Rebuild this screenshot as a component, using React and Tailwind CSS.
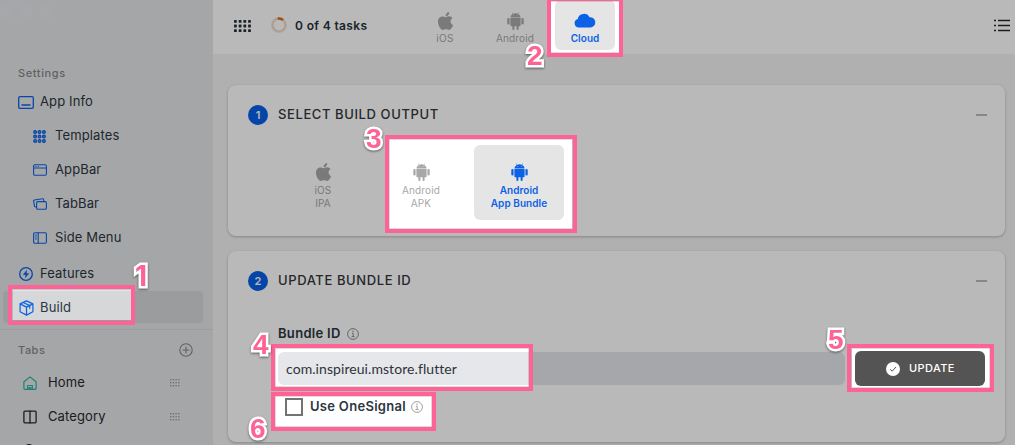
import React from "react";

const Android = ({ className }) => (
  <svg viewBox="0 0 17 18" className={className} fill="currentColor">
    <path d="M3.400 5.600a5.100 4.300 0 0 1 2.400-3.600L4.900.5l.3-.2.9 1.500a6 6 0 0 1 4.800 0L11.800.3l.3.2-.9 1.500a5.100 4.300 0 0 1 2.400 3.600z" />
    <path d="M3.400 6.100h10.200v7.200a1 1 0 0 1-1 1h-1v2.600a1 1 0 0 1-2 0v-2.600H7.400v2.600a1 1 0 0 1-2 0v-2.600h-1a1 1 0 0 1-1-1z" />
    <rect x="0.300" y="6" width="2.300" height="6.600" rx="1.100" />
    <rect x="14.400" y="6" width="2.300" height="6.600" rx="1.100" />
    <circle cx="6.300" cy="3.700" r="0.400" fill="#e5e5e5" />
    <circle cx="10.700" cy="3.700" r="0.400" fill="#e5e5e5" />
  </svg>
);

const Apple = ({ className }) => (
  <svg viewBox="4 32 376 448" className={className} fill="currentColor">
    <path d="M318.700 268.700c-.2-36.700 16.400-64.400 50-84.800-18.800-26.900-47.200-41.700-84.700-44.600-35.500-2.800-74.300 20.700-88.500 20.700-15 0-49.400-19.700-76.400-19.700C63.300 141.200 4 184.800 4 273.500q0 39.300 14.400 81.200c12.800 36.700 59 126.700 107.200 125.200 25.200-.6 43-17.900 75.800-17.900 31.800 0 48.300 17.900 76.400 17.900 48.600-.7 90.400-82.500 102.600-119.300-65.200-30.700-61.700-90-61.700-91.900zm-56.600-164.200c27.300-32.400 24.800-61.900 24-72.500-24.100 1.400-52 16.400-67.900 34.900-17.500 19.800-27.800 44.300-25.600 71.900 26.100 2 49.900-11.400 69.500-34.300z" />
  </svg>
);

const Cloud = () => (
  <svg viewBox="0 0 22 15" className="h-[15px] w-[22px]" fill="currentColor">
    <path d="M4.800 14.500A4.400 4.400 0 0 1 3.700 5.900 6.300 6.300 0 0 1 15.500 4.300a5.100 5.100 0 0 1 1.300 10.200z" />
  </svg>
);

const Info = ({ className }) => (
  <svg viewBox="0 0 12 12" className={className} fill="none" stroke="currentColor" strokeWidth="1">
    <circle cx="6" cy="6" r="5.400" />
    <path d="M5 5.200h1.200v3.300M4.600 8.600h3" />
    <circle cx="6" cy="3.300" r=".75" fill="currentColor" stroke="none" />
  </svg>
);

const stroke = { fill: "none", stroke: "currentColor", strokeWidth: 1.3, strokeLinejoin: "round", strokeLinecap: "round" };

const icons = {
  info: (
    <svg viewBox="0 0 16 13" className="h-[13px] w-4" {...stroke}>
      <rect x=".7" y=".7" width="14.600" height="11.600" rx="1.300" />
      <path d="M4 9h8" strokeWidth="1.500" />
    </svg>
  ),
  templates: (
    <svg viewBox="0 0 13 13" className="h-[13px] w-[13px]" {...stroke} strokeWidth="1.200">
      {[2.1, 6.5, 10.9].map((x) => [2.1, 6.5, 10.9].map((y) => <circle key={`${x}-${y}`} cx={x} cy={y} r="1.400" fill="#5b93ee" />))}
    </svg>
  ),
  appbar: (
    <svg viewBox="0 0 14 12" className="h-3 w-3.5" {...stroke} strokeWidth="1.100">
      <rect x=".6" y=".8" width="12.800" height="10.400" rx="1.200" />
      <path d="M.8 4h12.400" />
      <path d="M2.200 2.400h.2M3.800 2.400h.2M5.400 2.400h.2" strokeWidth=".8" />
    </svg>
  ),
  tabbar: (
    <svg viewBox="0 0 14 12" className="h-3 w-3.5" {...stroke} strokeWidth="1.100">
      <rect x="3.600" y="3.600" width="9.800" height="7.600" rx="1.300" />
      <path d="M2.500 9 1.600 8.600 .6 3.200a1 1 0 0 1 .8-1.200L9.400.7a1 1 0 0 1 1.200.8l.3 1.900" />
    </svg>
  ),
  sidemenu: (
    <svg viewBox="0 0 14 12" className="h-3 w-3.5" {...stroke} strokeWidth="1.100">
      <rect x=".6" y=".7" width="12.800" height="10.600" rx="1.200" />
      <path d="M5.200.8v10.400" />
      <path d="M2.300 3h1.200M2.300 5h1.200M2.300 7h1.200" strokeWidth=".9" />
    </svg>
  ),
  features: (
    <svg viewBox="0 0 14 14" className="ml-px h-3.5 w-3.5" {...stroke}>
      <circle cx="7" cy="7" r="6.300" />
      <path d="M8 2.800 3.800 7.700h2.700L6 11.200l4.200-4.900H7.500z" fill="currentColor" stroke="none" />
    </svg>
  ),
  build: (
    <svg viewBox="0 0 15 16" className="ml-px h-4 w-[15px]" {...stroke} strokeWidth="1.200">
      <path d="M7.500.9 13.900 3.900v7.900L7.500 15.100 1.100 11.800V3.900zM1.100 3.900l6.400 3.200 6.400-3.200M7.500 7.100v8M4.300 2.500l6.400 3.100v2.600" />
    </svg>
  ),
  home: (
    <svg viewBox="0 0 14 14" className="h-3.5 w-3.5" {...stroke} strokeWidth="1.200">
      <path d="M.9 5.800 7 .9l6.100 4.900v6.500a1 1 0 0 1-1 1H1.900a1 1 0 0 1-1-1zM4.700 13.200V9.500h4.600v3.700M6.300 13.200v-1.700h1.400v1.700" />
    </svg>
  ),
  category: (
    <svg viewBox="0 0 14 14" className="h-3.5 w-3.5" {...stroke}>
      <rect x=".9" y="1.200" width="12.200" height="11.600" rx="1" />
      <path d="M7 1.200v11.600" />
    </svg>
  ),
};

const Row = ({ icon, label, sub }) => (
  <div className={`flex h-[34px] items-center text-[#2b363f] ${sub ? "pl-[33px]" : "pl-[18px]"}`}>
    <span className="flex w-[22px] shrink-0 text-[#0b62e6]">{icons[icon]}</span>
    <span className="whitespace-nowrap text-[13px] tracking-[0.12px]">{label}</span>
  </div>
);

const Handle = () => (
  <svg viewBox="0 0 10 8" className="h-2 w-2.5 text-[#9d9ea2]" fill="currentColor">
    {[0, 2.7, 5.4, 8.1].map((x) => [0, 3, 6].map((y) => <rect key={`${x}-${y}`} x={x} y={y} width="1.400" height="1.400" />))}
  </svg>
);

const TabRow = ({ icon, label, color }) => (
  <div className="flex h-[34px] items-center pl-[23px] pr-[33px]">
    <span className={`mr-[11px] flex ${color}`}>{icons[icon]}</span>
    <span className="grow text-[13px] tracking-[0.12px] text-[#26282c]">{label}</span>
    <Handle />
  </div>
);

const Sidebar = () => (
  <aside className="flex h-full w-[213px] shrink-0 flex-col overflow-hidden bg-[#e4e5e8]">
    <div className="flex h-[18px] shrink-0 items-end gap-2 pt-[3px]">
      {[0, 1, 2].map((n) => (
        <span key={n} className="h-3 w-3 rounded-full bg-[#e7e8ee]" />
      ))}
    </div>
    <div className="mt-[47px] h-4 shrink-0 pl-[18px] text-[11px] font-medium leading-4 tracking-[0.6px] text-[#85878b]">Settings</div>
    <nav className="flex shrink-0 flex-col pt-1">
      <Row icon="info" label="App Info" />
      <Row icon="templates" label="Templates" sub />
      <Row icon="appbar" label="AppBar" sub />
      <Row icon="tabbar" label="TabBar" sub />
      <Row icon="sidemenu" label="Side Menu" sub />
      <div className="mt-[2px]">
        <Row icon="features" label="Features" />
      </div>
      <div className="ml-[3px] mr-2.5 flex h-8 items-center rounded bg-[#d5d7d9]">
        <div className="-ml-[3px] pt-px">
          <Row icon="build" label="Build" />
        </div>
      </div>
    </nav>
    <div className="mt-[6px] h-px shrink-0 bg-[#d6d7da]" />
    <div className="mt-[13px] flex h-[14px] shrink-0 items-center justify-between pl-[18px] pr-5 text-[11px] font-medium tracking-[0.5px] text-[#85878b]">
      Tabs
      <svg viewBox="0 0 14 14" className="h-3.5 w-3.5" {...stroke} strokeWidth="1.100">
        <circle cx="7" cy="7" r="6.200" />
        <path d="M4 7h6M7 4v6" />
      </svg>
    </div>
    <div className="flex shrink-0 flex-col pt-[9px]">
      <TabRow icon="home" label="Home" color="text-[#2bb3a0]" />
      <TabRow icon="category" label="Category" color="text-[#26282c]" />
      <div className="flex h-[34px] items-start pl-[25px] pt-2.5">
        <span className="h-2 w-2 rounded-full bg-[#26282c]" />
      </div>
    </div>
  </aside>
);

const Header = () => (
  <header className="flex h-[54px] shrink-0 bg-white pl-[21px] pr-[5px]">
    <div className="flex w-[204px] shrink-0 items-center pb-1">
      <svg viewBox="0 0 17 12" className="mt-px h-3 w-[17px]" fill="#26323a">
        {[0, 4.7, 9.4, 14.1].map((x) => [0, 4.6, 9.2].map((y) => <rect key={`${x}-${y}`} x={x} y={y} width="2.800" height="2.800" rx=".6" />))}
      </svg>
      <svg viewBox="0 0 16 16" className="ml-5 h-4 w-4" fill="none" strokeWidth="2.600">
        <circle cx="8" cy="8" r="6.500" stroke="#eddccb" />
        <path d="M6.800 1.600A6.500 6.500 0 0 1 12 2.900" stroke="#e06a0c" />
      </svg>
      <span className="ml-2 whitespace-nowrap pt-px text-[12px] font-semibold tracking-[0.35px] text-[#26323a]">0 of 4 tasks</span>
    </div>
    <div className="flex text-[#a8a8a8]">
      <div className="flex h-[50px] w-[14px] flex-col items-center pt-3">
        <Apple className="h-[18px] w-[15px] shrink-0" />
        <span className="pt-px text-[10px] leading-[14px] tracking-[0.3px]">iOS</span>
      </div>
      <div className="ml-[33px] flex h-[50px] w-[60px] flex-col items-center pt-3">
        <Android className="h-[18px] w-[17px] shrink-0" />
        <span className="pt-px text-[10px] leading-[14px] tracking-[0.1px]">Android</span>
      </div>
      <div className="ml-2.5 flex h-[50px] w-[60px] flex-col items-center rounded-md bg-[#e5e5e5] pt-[13px] text-[#0b62e6]">
        <Cloud />
        <span className="pt-[3px] text-[10px] font-semibold leading-[14px] tracking-[0.05px]">Cloud</span>
      </div>
    </div>
    <div className="flex grow items-center justify-end pb-1">
      <svg viewBox="0 0 16 13" className="h-[13px] w-4" stroke="#26282c" strokeWidth="1.400">
        <path d="M0 1.500h2M4 1.500h12M0 6.500h2M4 6.500h12M0 11.500h2M4 11.500h12" />
      </svg>
    </div>
  </header>
);

const CardHead = ({ n, title }) => (
  <div className="flex h-5 items-center">
    <span className="flex h-5 w-5 items-center justify-center rounded-full bg-[#0760e8] text-[11px] font-semibold text-white">{n}</span>
    <span className="ml-2.5 grow whitespace-nowrap text-[13px] font-medium tracking-[0.6px] text-[#33363a]">{title}</span>
    <span className="-mr-0.5 h-[2px] w-[11px] bg-[#bbbbbb]" />
  </div>
);

const Output = ({ icon, a, b, active }) => (
  <div className={`flex h-[75px] w-[90px] flex-col items-center rounded-md pt-[18px] text-[10px] leading-[13px] ${active ? "bg-[#e5e5e5] font-semibold tracking-[0.05px] text-[#0b62e6]" : "tracking-[0.1px] text-[#a8a8a8]"}`}>
    {icon === "apple" ? <Apple className="h-[18px] w-[15px] shrink-0" /> : <Android className="h-[18px] w-[17px] shrink-0" />}
    <span className="pt-[3px]">{a}</span>
    <span>{b}</span>
  </div>
);

const Main = () => (
  <main className="flex min-w-0 grow flex-col bg-[#f3f3f3]">
    <Header />
    <div className="flex flex-col gap-[15px] pl-[15px] pr-2.5 pt-[31px]">
      <section className="h-[151px] rounded-lg bg-white px-5 pt-5 shadow-[0_1px_3px_rgba(0,0,0,0.25)]">
        <CardHead n="1" title="SELECT BUILD OUTPUT" />
        <div className="flex gap-2 pl-[30px] pt-5">
          <Output icon="apple" a="iOS" b="IPA" />
          <Output icon="android" a="Android" b="APK" />
          <Output icon="android" a="Android" b="App Bundle" active />
        </div>
      </section>
      <section className="h-[191px] rounded-lg bg-white px-5 pt-5 shadow-[0_1px_3px_rgba(0,0,0,0.25)]">
        <CardHead n="2" title="UPDATE BUNDLE ID" />
        <div className="flex flex-col pl-[30px] pt-[34px]">
          <div className="flex h-[18px] items-center text-[13px] font-semibold tracking-[0.3px] text-[#2b363f]">
            Bundle ID
            <Info className="ml-1.5 h-3 w-3 text-[#8d8d8d]" />
          </div>
          <div className="flex gap-2.5 pt-2">
            <div className="mt-px flex h-[33px] grow items-center rounded-md bg-[#e5e7eb] pl-2 font-['Lato'] text-[14px] tracking-[0.07px] text-[#303338]">com.inspireui.mstore.flutter</div>
            <div className="flex h-[35px] w-[130px] items-center rounded-md bg-[#545454] pl-[31px] text-[11px] font-medium tracking-[0.4px] text-white">
              <svg viewBox="0 0 14 14" className="mr-[9px] h-3.5 w-3.5">
                <circle cx="7" cy="7" r="7" fill="#fff" />
                <path d="M4.200 7.300 6.200 9.200 10 5" fill="none" stroke="#545454" strokeWidth="1" />
              </svg>
              UPDATE
            </div>
          </div>
          <div className="mt-3 flex h-[18px] items-center pl-[7px] text-[13px] font-semibold tracking-[0.3px] text-[#2b363f]">
            <span className="mr-[7px] h-[18px] w-[18px] shrink-0 border-2 border-[#737373]" />
            Use OneSignal
            <Info className="ml-[5px] h-3 w-3 text-[#a0a0a0]" />
          </div>
        </div>
      </section>
    </div>
  </main>
);

const Frame = ({ n, frame, number }) => (
  <>
    <div className={`absolute border-4 border-[#fd6395] ${frame}`} />
    <span className={`absolute text-[28px] font-bold leading-none text-[#fd6395] [-webkit-text-stroke:5px_white] [paint-order:stroke_fill] [filter:drop-shadow(0_1px_1px_rgba(0,0,0,0.5))] ${number}`}>{n}</span>
  </>
);

export default function App() {
  return (
    <div className="relative flex h-[445px] w-[1015px] overflow-hidden font-['Inter',sans-serif]">
      <Sidebar />
      <Main />
      <svg viewBox="0 0 1015 445" className="absolute inset-0 h-[445px] w-[1015px]">
        <path
          fill="#000"
          fillOpacity=".275"
          fillRule="evenodd"
          d="M0 0H1015V445H0z M12.500 289.500H131V320H12.500z M551 1.500H619V52.500H551z M389.500 139.500H572V228.500H389.500z M275.500 348.500H528.500V386.500H275.500z M852 348.500H989.500V387.500H852z M275.500 396.500H431.500V426.500H275.500z"
        />
      </svg>
      <Frame n="1" frame="left-[8px] top-[285px] h-[40px] w-[127px]" number="left-[135px] top-[262px]" />
      <Frame n="2" frame="left-[547px] top-[-3px] h-[60px] w-[76px]" number="font-['Liberation_Sans'] left-[527px] top-[42px]" />
      <Frame n="3" frame="left-[385px] top-[135px] h-[98px] w-[192px]" number="font-['Liberation_Sans'] left-[366px] top-[125px]" />
      <Frame n="4" frame="left-[271px] top-[344px] h-[47px] w-[262px]" number="font-['Liberation_Sans'] left-[253px] top-[331px]" />
      <Frame n="5" frame="left-[847px] top-[344px] h-[48px] w-[147px]" number="font-['Liberation_Sans'] left-[828px] top-[326px]" />
      <Frame n="6" frame="left-[271px] top-[392px] h-[39px] w-[165px]" number="font-['Liberation_Sans'] left-[250px] top-[415px]" />
    </div>
  );
}
